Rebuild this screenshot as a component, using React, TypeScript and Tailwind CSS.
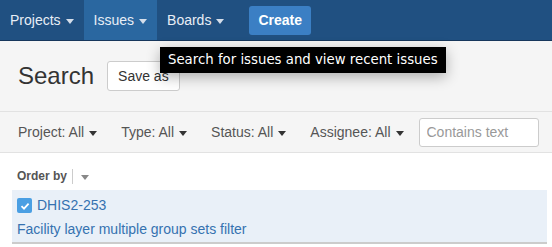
import React from 'react';

const Caret = ({ color = 'border-t-[#555]' }: { color?: string }) => (
  <span className={`inline-block w-0 h-0 border-t-[5px] border-x-[4px] border-x-transparent ${color} ml-[5px] translate-y-[1px]`} />
);

const NavItem = ({ label, active }: { label: string; active?: boolean }) => (
  <div className={`flex items-center px-[10px] text-[14px] text-[#e8eef6] ${active ? 'bg-[#2a67a0]' : ''}`}>
    {label}
    <Caret color="border-t-[#d5deea]" />
  </div>
);

const Filter = ({ label }: { label: string }) => (
  <div className="flex items-center text-[14px] text-[#555]">
    {label}
    <Caret color="border-t-[#333]" />
  </div>
);

const App: React.FC = () => {
  return (
    <div className="relative w-[552px] h-[247px] overflow-hidden bg-white font-['Liberation_Sans',Arial,sans-serif]">
      <nav className="flex h-[41px] bg-[#205081] border-b border-[#17375c]">
        <NavItem label="Projects" />
        <NavItem label="Issues" active />
        <NavItem label="Boards" />
        <div className="flex items-center ml-[15px]">
          <button className="h-[29px] px-[9px] rounded-[3px] bg-[#3b7fc4] text-white text-[14px] font-bold">Create</button>
        </div>
      </nav>

      <div className="flex items-center h-[71px] pl-[18px] gap-[13px] bg-[#f5f5f5] border-b border-[#e2e2e2]">
        <h1 className="text-[24px] text-[#333] leading-none">Search</h1>
        <button className="h-[30px] px-[10px] bg-white border border-[#ccc] rounded-[3px] text-[14px] text-[#333]">Save as</button>
      </div>

      <div className="flex items-center h-[41px] pl-[18px] gap-[24px] bg-[#f5f5f5] border-b border-[#e2e2e2]">
        <Filter label="Project: All" />
        <Filter label="Type: All" />
        <Filter label="Status: All" />
        <Filter label="Assignee: All" />
        <input
          placeholder="Contains text"
          className="w-[120px] h-[29px] -ml-[9px] px-[7px] bg-white border border-[#ccc] rounded-[3px] text-[14px] placeholder:text-[#999] outline-none"
        />
      </div>

      <div className="flex items-center h-[37px] pt-[9px] pl-[17px] text-[12px] font-bold text-[#555]">
        Order by
        <span className="w-px h-[15px] bg-[#ccc] ml-[5px] mr-[3px]" />
        <Caret color="border-t-[#888]" />
      </div>

      <div className="ml-[12px] mr-[5px] h-[54px] bg-[#e9f0f8] border-b-2 border-[#ccc] px-[5px] pt-[5px]">
        <div className="flex items-center gap-[5px] text-[14px] text-[#3572b0]">
          <span className="flex items-center justify-center w-[15px] h-[15px] rounded-[2px] bg-[#4a9fe3]">
            <svg width="10" height="10" viewBox="0 0 10 10">
              <path d="M1.5 5.2 L4 7.6 L8.6 2.6" stroke="white" strokeWidth="1.8" fill="none" />
            </svg>
          </span>
          DHIS2-253
        </div>
        <div className="mt-[3px] text-[14px] text-[#3572b0]">Facility layer multiple group sets filter</div>
      </div>

      <div className="absolute left-[160px] top-[47px] h-[26px] px-[8px] flex items-center bg-black text-white text-[13.3px] font-['DejaVu_Sans',sans-serif] shadow-[0_4px_14px_rgba(0,0,0,0.3)]">
        Search for issues and view recent issues
      </div>
    </div>
  );
};

export default App;
